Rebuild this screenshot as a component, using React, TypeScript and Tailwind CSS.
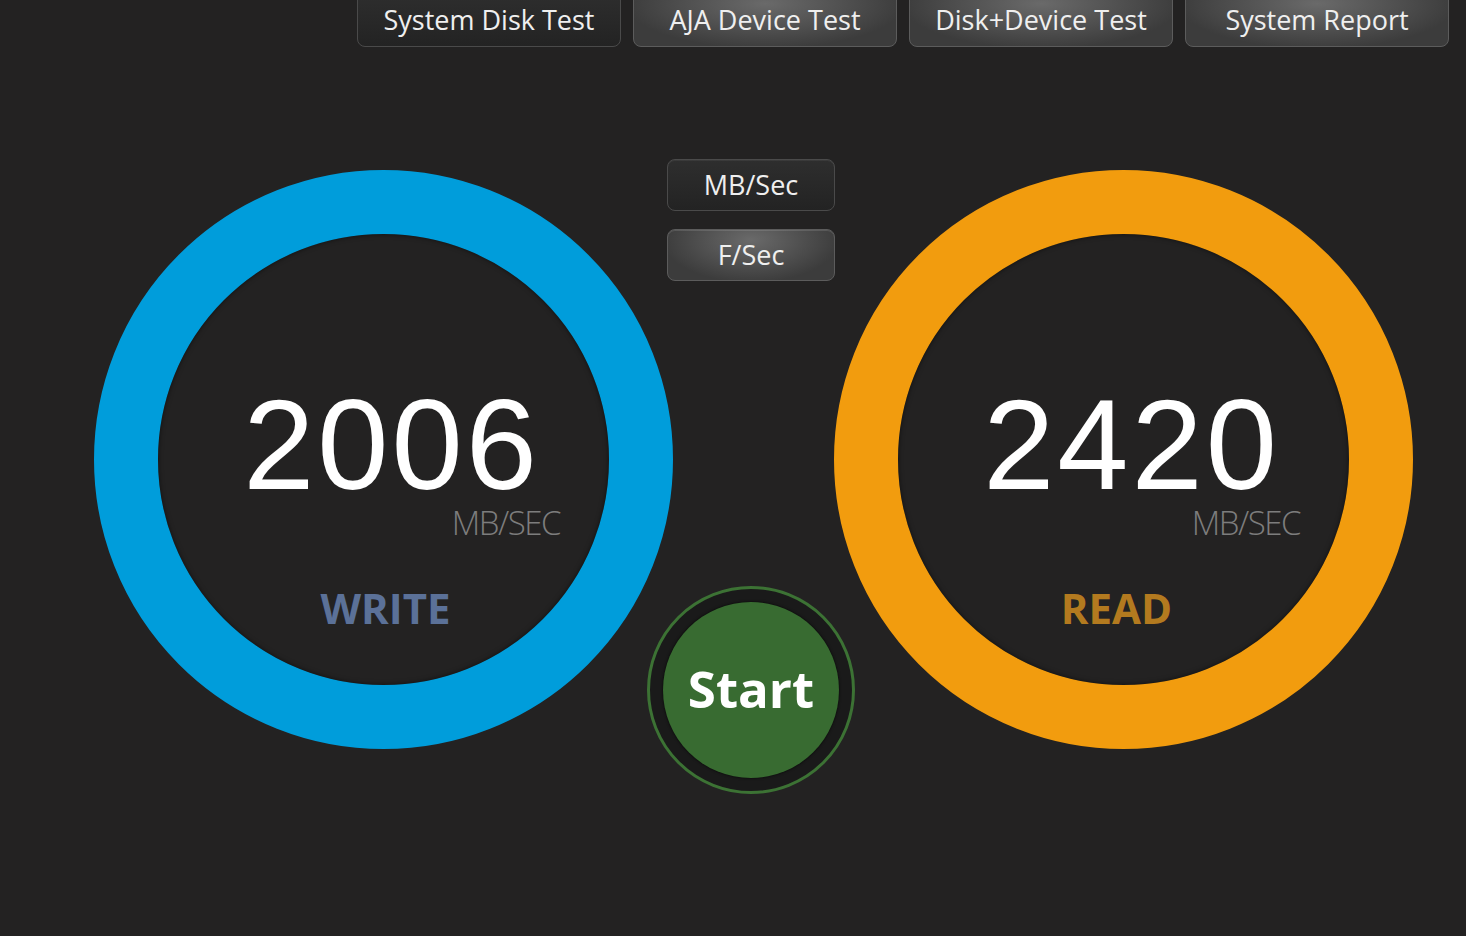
import React from 'react';

const tabs = [
  { label: 'System Disk Test', active: true },
  { label: 'AJA Device Test', active: false },
  { label: 'Disk+Device Test', active: false },
  { label: 'System Report', active: false },
];

const darkBtn =
  'border border-[#4a4a4a] bg-[linear-gradient(#2e2e2e,#232323)] shadow-[inset_0_1px_0_rgba(255,255,255,0.06)]';
const lightBtn =
  'border border-[#5c5c5c] bg-[radial-gradient(ellipse_at_50%_20%,#6a6a6a,#3c3c3c_75%)] shadow-[inset_0_1px_0_rgba(255,255,255,0.12)]';

interface GaugeProps {
  value: string;
  label: string;
  ring: string;
  labelClass: string;
}

const Gauge: React.FC<GaugeProps> = ({ value, label, ring, labelClass }) => (
  <div className={`mt-[11px] h-[579px] w-[579px] shrink-0 rounded-full border-[64px] ${ring}`}>
    <div className="flex h-full w-full flex-col items-center rounded-full shadow-[inset_0_0_5px_rgba(0,0,0,0.55)]">
      <div className="mt-[156px] pl-[16px] font-['Liberation_Sans'] text-[128px] leading-[110px] tracking-[3px] text-white">
        {value}
      </div>
      {/* units sit flush right under the number */}
      <div className="mt-[9px] flex w-full justify-end pr-[49px]">
        <span className="text-[33px] font-light leading-[28px] tracking-[-1.5px] text-[#7d7d7d]">MB/SEC</span>
      </div>
      <div className={`mt-[50px] text-[42px] font-bold leading-none ${labelClass}`}>{label}</div>
    </div>
  </div>
);

export default function App() {
  return (
    <div className="h-[936px] w-full overflow-hidden bg-[#232222] font-['Open_Sans',sans-serif]">
      {/* Test mode tabs */}
      <header className="-mt-2 flex justify-end gap-3 pr-[17px]">
        {tabs.map((t) => (
          <button
            key={t.label}
            className={`flex h-[55px] w-[264px] items-center justify-center rounded-[8px] pt-[2px] text-[27px] text-[#efefef] ${
              t.active ? darkBtn : lightBtn
            }`}
          >
            {t.label}
          </button>
        ))}
      </header>

      <main className="mt-[112px] flex items-start pl-[94px]">
        <Gauge value="2006" label="WRITE" ring="border-[#009ddb]" labelClass="pl-[4px] text-[#5b7198]" />

        <div className="flex w-[161px] shrink-0 flex-col items-center pr-[5px]">
          <button
            className={`flex h-[52px] w-[168px] shrink-0 items-center justify-center rounded-[8px] text-[27px] text-[#efefef] ${darkBtn}`}
          >
            MB/Sec
          </button>
          <button
            className={`mt-[18px] flex h-[52px] w-[168px] shrink-0 items-center justify-center rounded-[8px] text-[27px] text-[#efefef] ${lightBtn}`}
          >
            F/Sec
          </button>

          <div className="mt-[305px] h-[208px] w-[208px] shrink-0 rounded-full border-[3px] border-[#3c7234] bg-[#1a1a1a] p-[13px]">
            <button className="flex h-full w-full items-center justify-center rounded-full bg-[#386b31] shadow-[0_0_3px_rgba(0,0,0,0.8)]">
              <span className="-mt-[4px] text-[51px] font-bold leading-none text-white">Start</span>
            </button>
          </div>
        </div>

        <Gauge value="2420" label="READ" ring="border-[#f29c0e]" labelClass="pr-[14px] text-[#b37a1f]" />
      </main>
    </div>
  );
}
